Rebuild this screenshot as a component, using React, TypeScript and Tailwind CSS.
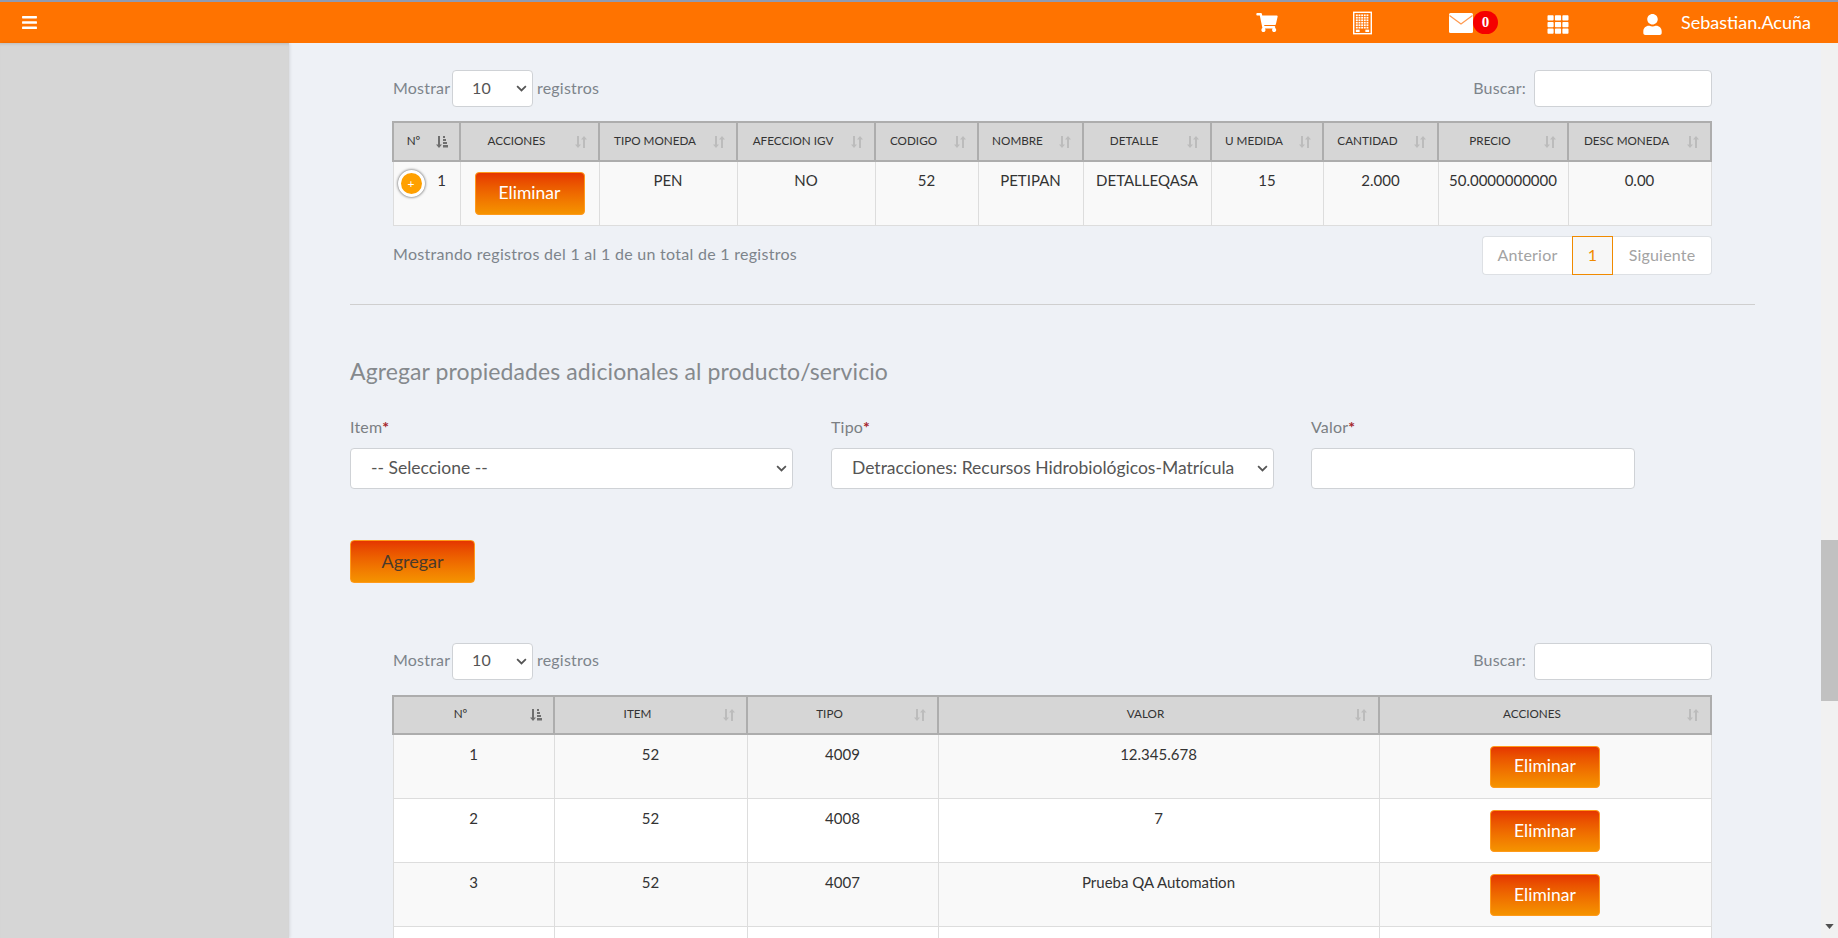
import { FaBars, FaShoppingCart, FaTh, FaUser } from "react-icons/fa";

const font = "font-['Lato','Liberation_Sans',sans-serif]";

function SortIcon({ active = false }: { active?: boolean }) {
  return (
    <svg viewBox="0 0 12 13" className="absolute right-[11px] top-1/2 h-[13px] w-[12px] -translate-y-1/2">
      {active ? (
        <g fill="#6f6f6f">
          <path d="M2 0.5h2v8.5h2l-3 3.5-3-3.5h2z" />
          <rect x="7" y="0.5" width="2" height="2" />
          <rect x="7" y="3.5" width="3" height="2" />
          <rect x="7" y="6.5" width="4" height="2" />
          <rect x="7" y="9.5" width="5" height="2.5" />
        </g>
      ) : (
        <g fill="#bcbcbc">
          <path d="M2 0.5h2v8.5h2l-3 3.5-3-3.5h2z" />
          <path d="M8 12.5h2v-8.500h2l-3-3.500-3 3.500h2z" />
        </g>
      )}
    </svg>
  );
}

function BuildingIcon() {
  const windows = [];
  for (let r = 0; r < 6; r++) {
    for (let c = 0; c < 5; c++) {
      windows.push(<rect key={`${r}-${c}`} x={3 + c * 2.8} y={3 + r * 2.6} width="2" height="1.800" fill="#fff" />);
    }
  }
  return (
    <svg viewBox="0 0 20 24" className="ml-[75px] h-[24px] w-[19px]">
      <rect x="0.750" y="0.750" width="18.500" height="22.500" fill="#ff7300" stroke="#fff" strokeWidth="1.500" />
      {windows}
      <rect x="3" y="19" width="4" height="2.500" fill="#fff" />
      <rect x="13" y="19" width="4" height="2.500" fill="#fff" />
    </svg>
  );
}

function MailIcon() {
  return (
    <svg viewBox="0 0 24 20" className="ml-[77px] h-[20px] w-[24px]">
      <rect width="24" height="20" rx="1.500" fill="#fff" />
      <path d="M0.500 2.500 12 11l11.500-8.500" fill="none" stroke="#ff9a50" strokeWidth="1.200" />
    </svg>
  );
}

function OrangeButton({ label, dark = false, height = "h-[42px]" }: { label: string; dark?: boolean; height?: string }) {
  return (
    <button
      className={`${height} rounded border border-[#ff9a1a] bg-gradient-to-b from-[#e53500] to-[#f59300] ${dark ? "w-[125px] text-[18px] text-[#4a3a2a]" : "w-[110px] text-[17.5px] text-white"}`}
    >
      {label}
    </button>
  );
}

function Chevron() {
  return (
    <svg viewBox="0 0 12 8" className="pointer-events-none absolute bottom-0 right-[6px] top-0 my-auto h-[7px] w-[11px]">
      <path d="M1 1.200 6 6.200l5-5" fill="none" stroke="#555" strokeWidth="2" />
    </svg>
  );
}

function Toolbar() {
  return (
    <div className="ml-[43px] flex h-[37px] w-[1319px] items-center justify-between text-[16px] tracking-[0.2px] text-[#7d848b]">
      <div className="flex items-center">
        <span className="w-[59px] pb-[2px]">Mostrar</span>
        <div className="relative">
          <select className="h-[37px] w-[81px] appearance-none rounded border border-[#cfd2d6] bg-white pb-[2px] pl-[19px] text-[16px] text-[#555]">
            <option>10</option>
          </select>
          <Chevron />
        </div>
        <span className="ml-[4px] pb-[2px]">registros</span>
      </div>
      <div className="flex items-center">
        <span className="mr-[8px] pb-[2px]">Buscar:</span>
        <input className="h-[37px] w-[178px] rounded border border-[#cfd2d6] bg-white" />
      </div>
    </div>
  );
}

function HeadCell({ label, active = false }: { label: string; active?: boolean }) {
  return (
    <th className="relative border-2 border-[#adadad] bg-[#d6d6d6] pb-[2px] pr-[26px] text-center text-[11.7px] font-normal whitespace-nowrap text-[#333]">
      {label}
      <SortIcon active={active} />
    </th>
  );
}

const productCols = [67, 139, 138, 138, 103, 105, 128, 112, 115, 130, 143];
const productHead = ["Nº", "ACCIONES", "TIPO MONEDA", "AFECCION IGV", "CODIGO", "NOMBRE", "DETALLE", "U MEDIDA", "CANTIDAD", "PRECIO", "DESC MONEDA"];
const productRow = ["PEN", "NO", "52", "PETIPAN", "DETALLEQASA", "15", "2.000", "50.0000000000", "0.00"];

const propCols = [161, 193, 191, 441, 332];
const propHead = ["Nº", "ITEM", "TIPO", "VALOR", "ACCIONES"];
const propRows = [
  ["1", "52", "4009", "12.345.678"],
  ["2", "52", "4008", "7"],
  ["3", "52", "4007", "Prueba QA Automation"],
];

const td = "border border-[#dddddd] text-center align-top text-[15px] text-[#333]";
const label = "block h-[20px] text-[16px] leading-[20px] tracking-[0.2px] text-[#7b7f83]";
const star = "font-bold text-[#a5262a]";
const field = "h-[41px] w-full rounded border border-[#cfd2d6] bg-white";

function FormSelect({ text }: { text: string }) {
  return (
    <div className="relative mt-[11px]">
      <select className={`${field} appearance-none pl-[20px] pr-[37px] text-[17.5px] text-[#555]`}>
        <option>{text}</option>
      </select>
      <Chevron />
    </div>
  );
}

export default function App() {
  return (
    <div className={`flex h-[938px] flex-col overflow-hidden bg-[#eef1f6] ${font}`}>
      <header className="flex h-[43px] shrink-0 items-center border-t-2 border-[#8e9bb3] bg-[#ff7300] text-white">
        <FaBars className="ml-[21px] h-[17px] w-[17px]" />
        <div className="ml-auto flex items-center pr-[27px]">
          <FaShoppingCart className="h-[19px] w-[22px]" />
          <BuildingIcon />
          <MailIcon />
          <span className="flex h-[23px] w-[25px] items-center justify-center rounded-full bg-[#f50000] font-['Liberation_Serif',serif] text-[15px] font-bold">0</span>
          <FaTh className="ml-[48px] mt-[4px] h-[21px] w-[24px]" />
          <FaUser className="ml-[73px] mt-[4px] h-[21px] w-[19px]" />
          <span className="ml-[19px] text-[18px]">Sebastian.Acuña</span>
        </div>
      </header>

      <div className="flex min-h-0 flex-1">
        <aside className="w-[289px] shrink-0 bg-[#d6d6d6] shadow-[inset_0_3px_3px_-2px_rgba(0,0,0,0.12),1px_0_3px_rgba(0,0,0,0.1)]" />

        <main className="min-w-0 flex-1 overflow-hidden pl-[61px] pt-[27px]">
          <div className="w-[1405px]">
            <Toolbar />

            <table className="mt-[14px] ml-[42px] w-[1318px] table-fixed border-collapse">
              <colgroup>
                {productCols.map((w, i) => (
                  <col key={i} width={w} />
                ))}
              </colgroup>
              <thead>
                <tr className="h-[39px]">
                  {productHead.map((h, i) => (
                    <HeadCell key={h} label={h} active={i === 0} />
                  ))}
                </tr>
              </thead>
              <tbody>
                <tr className="h-[64px] bg-[#f9f9f9]">
                  <td className={`${td} relative pl-[30px] pt-[7px]`}>
                    <span className="absolute left-[4px] top-[8px] flex h-[27px] w-[27px] items-center justify-center rounded-full border-[3px] border-white bg-[#ffa000] text-[12px] text-white shadow-[0_0_3px_#444]">+</span>
                    1
                  </td>
                  <td className={`${td} pt-[10px]`}>
                    <OrangeButton label="Eliminar" height="h-[43px]" />
                  </td>
                  {productRow.map((c, i) => (
                    <td key={i} className={`${td} pt-[7px]`}>
                      {c}
                    </td>
                  ))}
                </tr>
              </tbody>
            </table>

            <div className="ml-[43px] mt-[10px] flex w-[1319px] items-start justify-between">
              <span className="mt-[6px] text-[16px] tracking-[0.28px] text-[#7d848b]">Mostrando registros del 1 al 1 de un total de 1 registros</span>
              <div className="flex h-[39px] items-stretch text-[16px] tracking-[0.2px] text-[#a3a3a3]">
                <span className="flex w-[90px] items-center justify-center rounded-l border border-r-0 border-[#dde0e4] bg-white">Anterior</span>
                <span className="flex w-[41px] items-center justify-center border border-[#f08a00] bg-[#f7f7f7] text-[#f08a00]">1</span>
                <span className="flex w-[99px] items-center justify-center rounded-r border border-l-0 border-[#dde0e4] bg-white">Siguiente</span>
              </div>
            </div>

            <hr className="mt-[29px] border-[#cfcfcf]" />

            <h4 className="mt-[51px] h-[30px] text-[23px] leading-[30px] font-normal tracking-[0.1px] text-[#85898d]">Agregar propiedades adicionales al producto/servicio</h4>

            <div className="mt-[31px] flex gap-[38px]">
              <div className="w-[443px]">
                <label className={label}>Item<span className={star}>*</span></label>
                <FormSelect text="-- Seleccione --" />
              </div>
              <div className="w-[443px]">
                <label className={label}>Tipo<span className={star}>*</span></label>
                <FormSelect text="Detracciones: Recursos Hidrobiológicos-Matrícula de embarcación" />
              </div>
              <div className="-ml-[1px] w-[324px]">
                <label className={label}>Valor<span className={star}>*</span></label>
                <input className={`${field} mt-[11px]`} />
              </div>
            </div>

            <div className="mt-[51px]">
              <OrangeButton label="Agregar" dark height="h-[43px]" />
            </div>

            <div className="mt-[60px]">
              <Toolbar />
            </div>

            <table className="mt-[15px] ml-[42px] w-[1318px] table-fixed border-collapse">
              <colgroup>
                {propCols.map((w, i) => (
                  <col key={i} width={w} />
                ))}
              </colgroup>
              <thead>
                <tr className="h-[38px]">
                  {propHead.map((h, i) => (
                    <HeadCell key={h} label={h} active={i === 0} />
                  ))}
                </tr>
              </thead>
              <tbody>
                {propRows.map((row, i) => (
                  <tr key={i} className={`${i === 0 ? "h-[65px]" : "h-[64px]"} ${i % 2 === 0 ? "bg-[#f9f9f9]" : "bg-white"}`}>
                    {row.map((c, j) => (
                      <td key={j} className={`${td} pt-[8px]`}>
                        {c}
                      </td>
                    ))}
                    <td className={`${td} pt-[11px]`}>
                      <OrangeButton label="Eliminar" />
                    </td>
                  </tr>
                ))}
                <tr className="h-[64px] bg-white">
                  {propCols.map((_, j) => (
                    <td key={j} className={td} />
                  ))}
                </tr>
              </tbody>
            </table>
          </div>
        </main>

        <div className="relative w-[17px] shrink-0 bg-[#f1f1f1]">
          <div className="absolute left-0 right-0 top-[497px] h-[161px] bg-[#c1c1c1]" />
          <svg viewBox="0 0 10 6" className="absolute bottom-[9px] left-[4px] h-[5px] w-[9px]">
            <path d="M0 0h10L5 6z" fill="#505050" />
          </svg>
        </div>
      </div>
    </div>
  );
}
